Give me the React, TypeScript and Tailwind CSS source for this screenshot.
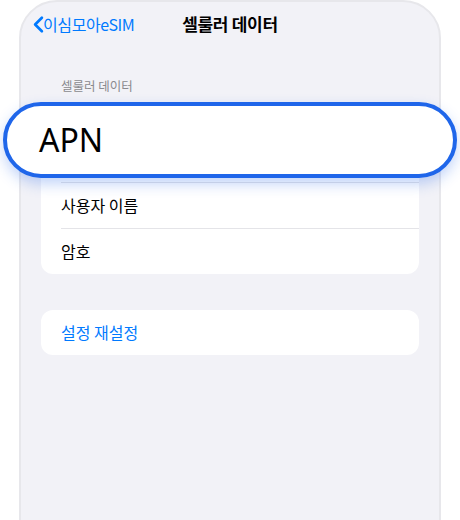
import { ChevronLeft } from 'lucide-react';

const font = "font-['Noto_Sans_CJK_KR','Noto_Sans',sans-serif]";

export default function App() {
  return (
    <div className={`relative w-[460px] h-[520px] overflow-hidden bg-white ${font}`}>
      {/* Phone screen */}
      <div className="mx-[19px] h-[560px] rounded-t-[38px] border-2 border-[#e7e7eb] bg-[#f2f2f7]">
        {/* Nav bar */}
        <div className="relative h-[44px] flex items-center">
          <div className="flex items-center pl-[4px] text-[#007aff]">
            <ChevronLeft className="w-[27px] h-[27px] -mr-[9px]" strokeWidth={2.4} />
            <span className="text-[16px] leading-none tracking-[-0.4px]">이심모아eSIM</span>
          </div>
          <div className="absolute left-0 right-0 top-0 h-[44px] flex items-center justify-center text-[17px] font-semibold text-black tracking-[-0.3px]">
            셀룰러 데이터
          </div>
        </div>

        {/* Section header */}
        <div className="pl-[40px] pt-[34px] text-[12.5px] leading-none text-[#8a8a8e]">셀룰러 데이터</div>

        {/* Card */}
        <div className="mx-[20px] mt-[11px] rounded-[12px] bg-white">
          <div className="h-[78px]" />
          <div className="ml-[20px] border-t border-[#e4e4e8]" />
          <div className="h-[45px] flex items-center pl-[20px] text-[16px] text-black">사용자 이름</div>
          <div className="ml-[20px] border-t border-[#e4e4e8]" />
          <div className="h-[45px] flex items-center pl-[20px] text-[16px] text-black">암호</div>
        </div>

        <div className="mx-[20px] mt-[36px] h-[45px] rounded-[12px] bg-white flex items-center pl-[20px] text-[16px] text-[#007aff]">
          설정 재설정
        </div>
      </div>

      {/* Highlighted APN pill */}
      <div className="absolute left-[3px] top-[102px] w-[454px] h-[76px] rounded-full border-[4px] border-[#1f66ea] bg-white flex items-center pl-[32px] shadow-[0_6px_14px_rgba(37,99,235,0.28)]">
        <span className="text-[32px] leading-none text-black font-['Noto_Sans',sans-serif]">APN</span>
      </div>
    </div>
  );
}
